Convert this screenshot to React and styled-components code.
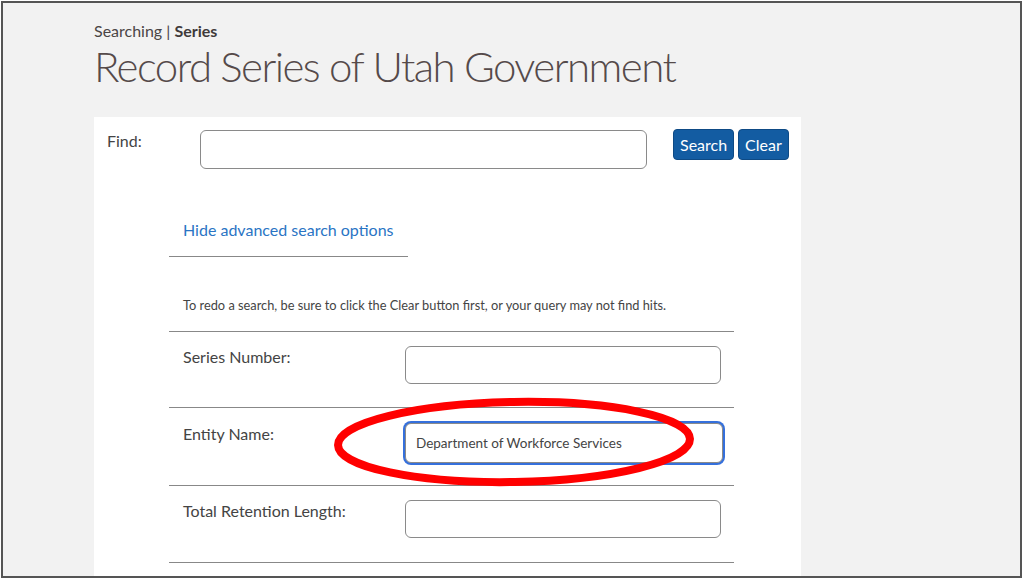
import React from "react";
import styled, { createGlobalStyle } from "styled-components";

const GlobalStyle = createGlobalStyle`
  html, body {
    margin: 0;
    padding: 0;
    background: #ffffff;
  }
  body {
    font-family: "Lato", "Liberation Sans", sans-serif;
  }
`;

const Frame = styled.div`
  position: relative;
  box-sizing: border-box;
  margin: 1px 0 0 1px;
  width: 1021px;
  height: 577px;
  border: 2px solid #555555;
  background: #f2f2f2;
  overflow: hidden;
`;

const Page = styled.div`
  padding: 17px 0 0 91px;
`;

const Crumb = styled.div`
  font-size: 16px;
  color: #4a4545;
  line-height: 22px;

  b {
    font-weight: 700;
    color: #3f3a3a;
  }
`;

const Title = styled.h1`
  margin: 0;
  font-size: 42px;
  font-weight: 300;
  color: #554a4a;
  line-height: 48px;
  letter-spacing: -1.55px;
`;

const Panel = styled.div`
  margin-top: 27px;
  width: 707px;
  height: 480px;
  background: #ffffff;
  box-sizing: border-box;
  padding: 13px 0 0 13px;
`;

const FindRow = styled.div`
  display: flex;
  align-items: flex-start;
`;

const FindLabel = styled.label`
  width: 93px;
  font-size: 16px;
  color: #444;
  line-height: 22px;
`;

const TextBox = styled.div`
  box-sizing: border-box;
  width: ${(p) => p.w}px;
  height: ${(p) => p.h}px;
  border: 1px solid #8a8a8a;
  border-radius: 6px;
  background: #fff;
  display: flex;
  align-items: center;
  padding-left: 10px;
  font-size: 13.5px;
  color: #444;
  box-shadow: ${(p) => (p.focused ? "0 0 0 2px #3570dc" : "none")};
`;

const ButtonGroup = styled.div`
  display: flex;
  gap: 4px;
  margin-left: 26px;
  margin-top: -1px;
`;

const Button = styled.button`
  height: 31px;
  padding: 0 6px;
  border: 1px solid #0e4a85;
  border-radius: 4px;
  background: #135ca2;
  color: #ffffff;
  font-family: "Lato", "Liberation Sans", sans-serif;
  font-size: 16px;
`;

const Advanced = styled.div`
  margin-left: 62px;
  width: 565px;
`;

const ToggleLink = styled.div`
  width: 239px;
  box-sizing: border-box;
  margin-top: 50px;
  padding: 0 0 15px 14px;
  border-bottom: 1px solid #888;
  font-size: 16px;
  line-height: 22px;
  color: #2a74c4;
`;

const Note = styled.p`
  margin: 0;
  padding: 39px 0 17px 14px;
  font-size: 12.8px;
  line-height: 18px;
  color: #444;
  border-bottom: 1px solid #888;
`;

const FieldRow = styled.div`
  display: flex;
  align-items: flex-start;
  height: ${(p) => p.h}px;
  box-sizing: border-box;
  padding-top: ${(p) => p.pt}px;
  border-bottom: 1px solid #888;
`;

const FieldLabel = styled.div`
  width: 222px;
  padding: ${(p) => p.lt}px 0 0 14px;
  font-size: 16px;
  line-height: 22px;
  color: #444;
`;

const Annotation = styled.svg`
  position: absolute;
  left: 325px;
  top: 391px;
  pointer-events: none;
`;

export default function App() {
  return (
    <>
      <GlobalStyle />
      <Frame>
        <Page>
          <Crumb>
            Searching | <b>Series</b>
          </Crumb>
          <Title>Record Series of Utah Government</Title>
          <Panel>
            <FindRow>
              <FindLabel>Find:</FindLabel>
              <TextBox w={447} h={39} />
              <ButtonGroup>
                <Button>Search</Button>
                <Button>Clear</Button>
              </ButtonGroup>
            </FindRow>
            <Advanced>
              <ToggleLink>Hide advanced search options</ToggleLink>
              <Note>
                To redo a search, be sure to click the Clear button first, or
                your query may not find hits.
              </Note>
              <FieldRow h={76} pt={14}>
                <FieldLabel lt={0}>Series Number:</FieldLabel>
                <TextBox w={316} h={38} />
              </FieldRow>
              <FieldRow h={78} pt={15}>
                <FieldLabel lt={0}>Entity Name:</FieldLabel>
                <TextBox w={318} h={40} focused>
                  Department of Workforce Services
                </TextBox>
              </FieldRow>
              <FieldRow h={77} pt={14}>
                <FieldLabel lt={0}>Total Retention Length:</FieldLabel>
                <TextBox w={316} h={38} />
              </FieldRow>
            </Advanced>
          </Panel>
        </Page>
        <Annotation width="380" height="104" viewBox="0 0 380 104">
          <ellipse
            cx="186"
            cy="48"
            rx="176"
            ry="40"
            fill="none"
            stroke="#ff0000"
            strokeWidth="8"
            transform="rotate(-1 186 48)"
          />
        </Annotation>
      </Frame>
    </>
  );
}
